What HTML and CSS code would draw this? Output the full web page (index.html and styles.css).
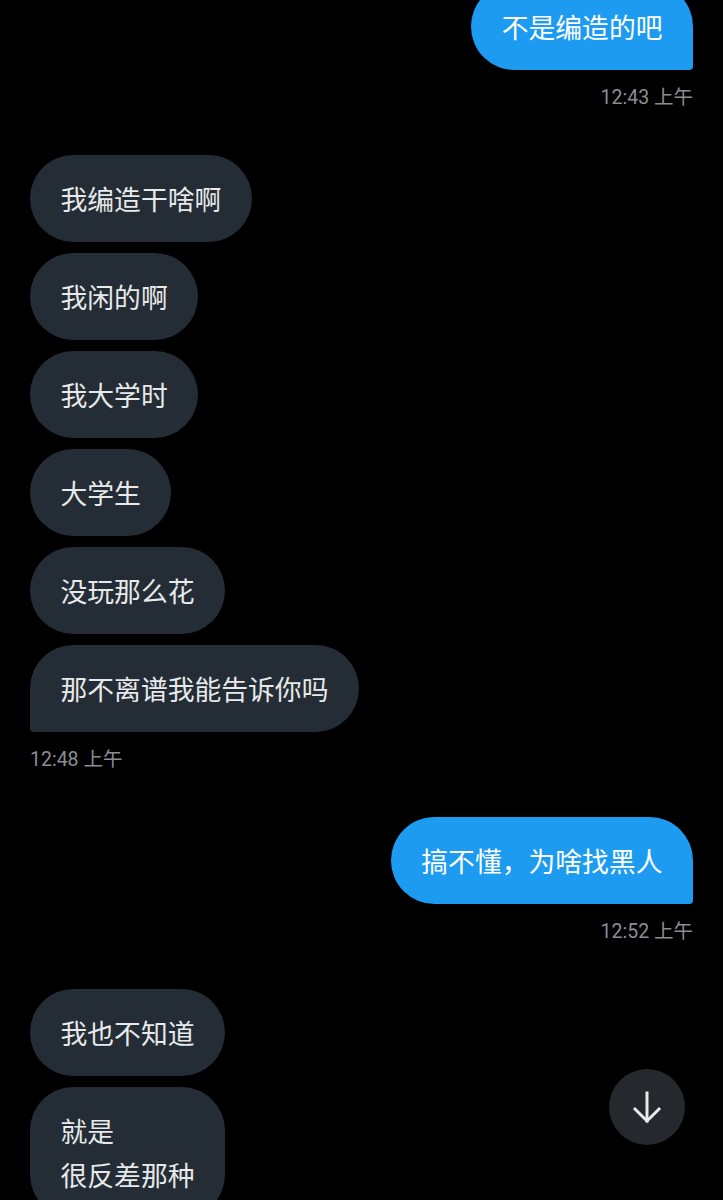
FILE: index.html
```html
<!doctype html>
<html lang="zh-CN">

<head>
    <meta charset="UTF-8" />
    <meta name="viewport" content="width=device-width, initial-scale=1.0" />
    <title>消息</title>
    <link rel="stylesheet" href="styles.css">
</head>

<body>
    <div class="conversation">

        <!-- 我发的 -->
        <div class="group sent">
            <div class="bubble last">不是编造的吧</div>
            <div class="time">12:43 上午</div>
        </div>

        <!-- 对方 -->
        <div class="group received">
            <div class="bubble">我编造干啥啊</div>
            <div class="bubble">我闲的啊</div>
            <div class="bubble">我大学时</div>
            <div class="bubble">大学生</div>
            <div class="bubble">没玩那么花</div>
            <div class="bubble last">那不离谱我能告诉你吗</div>
            <div class="time">12:48 上午</div>
        </div>

        <div class="group sent">
            <div class="bubble last">搞不懂，为啥找黑人</div>
            <div class="time">12:52 上午</div>
        </div>

        <div class="group received">
            <div class="bubble">我也不知道</div>
            <div class="bubble">就是<br>很反差那种</div>
        </div>

    </div>

    <button class="scroll-down" type="button" aria-label="scroll down">
        <svg width="34" height="34" viewBox="0 0 34 34" fill="none" stroke="#e7e9ea" stroke-width="3" stroke-linecap="square">
            <path d="M17 3v28" />
            <path d="M5 19l12 12 12-12" />
        </svg>
    </button>
</body>

</html>
```

FILE: styles.css
```css
*,
*::before,
*::after {
    box-sizing: border-box;
}

html,
body {
    height: 1200px;
}

body {
    margin: 0;
    background: #000;
    color: #e7e9ea;
    font-family: "Noto Sans CJK SC", "Noto Sans", sans-serif;
    overflow: hidden;
    position: relative;
}

.conversation {
    display: flex;
    flex-direction: column;
    gap: 43px;
    padding: 0 30px;
    margin-top: -17px;
}

.group {
    display: flex;
    flex-direction: column;
    gap: 11px;
}

.group.sent {
    align-items: flex-end;
}

.group.received {
    align-items: flex-start;
}

.bubble {
    font-size: 26.8px;
    line-height: 44px;
    padding: 21.5px 30.5px;
    border-radius: 43.5px;
    white-space: nowrap;
}

.sent .bubble {
    background: #1d9bf0;
    color: #fff;
}

.received .bubble {
    background: #242d35;
}

.sent .bubble.last {
    border-bottom-right-radius: 4px;
}

.received .bubble.last {
    border-bottom-left-radius: 4px;
}

.time {
    margin-top: 3px;
    font-family: Roboto, "Noto Sans CJK SC", sans-serif;
    font-size: 19.5px;
    line-height: 28px;
    color: #8a8e93;
}

.scroll-down {
    position: absolute;
    left: 609px;
    top: 1069px;
    width: 76px;
    height: 76px;
    border: 0;
    border-radius: 50%;
    background: #25282c;
    display: grid;
    place-items: center;
    padding: 0;
}
```
